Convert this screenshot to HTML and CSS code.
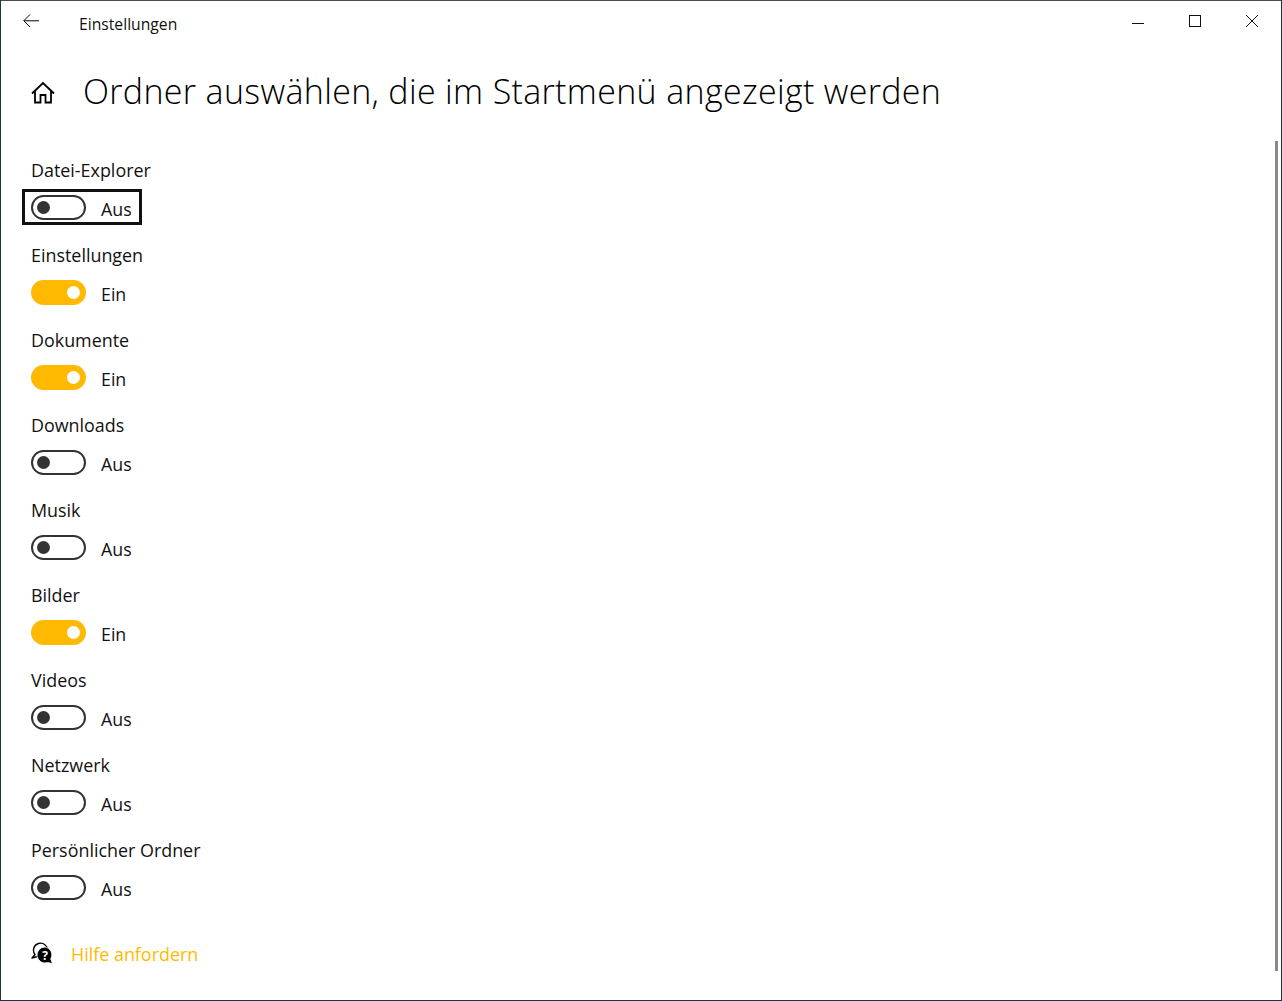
FILE: index.html
```html
<!DOCTYPE html>
<html lang="de">
<head>
    <meta charset="UTF-8">
    <title>Einstellungen</title>
    <link rel="stylesheet" href="styles.css">
</head>
<body>
<div class="window">
    <div class="titlebar">
        <svg class="back_icon" width="16" height="14" viewBox="0 0 16 14">
            <path d="M7 .5 .8 6.800 7 13M1 6.800h15" fill="none" stroke="#000" stroke-width="1"/>
        </svg>
        <span class="app_name">Einstellungen</span>
        <div class="win_btns">
            <svg width="12" height="12" viewBox="0 0 12 12"><path d="M0 8.500h12" stroke="#111" fill="none"/></svg>
            <svg width="12" height="12" viewBox="0 0 12 12"><rect x=".5" y=".5" width="11" height="11" stroke="#111" fill="none"/></svg>
            <svg width="12" height="12" viewBox="0 0 12 12"><path d="M0 0l12 12M12 0 0 12" stroke="#111" fill="none"/></svg>
        </div>
    </div>
    <div class="page_head">
        <svg class="home_icon" width="24" height="24" viewBox="0 0 24 24">
            <path d="M1 12.500 12 2l11 10.500M4 10v11.500h5.500v-7.500h5v7.500H20V10" fill="none" stroke="#000" stroke-width="1.800"/>
        </svg>
        <h1>Ordner auswählen, die im Startmenü angezeigt werden</h1>
    </div>
    <div class="content">
        <div class="setting">
            <div class="setting_name">Datei-Explorer</div>
            <div class="toggle_row focused"><span class="toggle"></span><span class="state">Aus</span></div>
        </div>
        <div class="setting">
            <div class="setting_name">Einstellungen</div>
            <div class="toggle_row"><span class="toggle on"></span><span class="state">Ein</span></div>
        </div>
        <div class="setting">
            <div class="setting_name">Dokumente</div>
            <div class="toggle_row"><span class="toggle on"></span><span class="state">Ein</span></div>
        </div>
        <div class="setting">
            <div class="setting_name">Downloads</div>
            <div class="toggle_row"><span class="toggle"></span><span class="state">Aus</span></div>
        </div>
        <div class="setting">
            <div class="setting_name">Musik</div>
            <div class="toggle_row"><span class="toggle"></span><span class="state">Aus</span></div>
        </div>
        <div class="setting">
            <div class="setting_name">Bilder</div>
            <div class="toggle_row"><span class="toggle on"></span><span class="state">Ein</span></div>
        </div>
        <div class="setting">
            <div class="setting_name">Videos</div>
            <div class="toggle_row"><span class="toggle"></span><span class="state">Aus</span></div>
        </div>
        <div class="setting">
            <div class="setting_name">Netzwerk</div>
            <div class="toggle_row"><span class="toggle"></span><span class="state">Aus</span></div>
        </div>
        <div class="setting">
            <div class="setting_name">Persönlicher Ordner</div>
            <div class="toggle_row"><span class="toggle"></span><span class="state">Aus</span></div>
        </div>
        <div class="help">
            <svg class="help_icon" width="22" height="22" viewBox="0 0 22 22">
                <path d="M4 12.500 1 16l5.500-1.500a7 7 0 1 0-2.500-2z" fill="#fff" stroke="#000" stroke-width="1.400" stroke-linejoin="round"/>
                <path d="M14 5a8 8 0 1 0 2.500 15.600L21.500 21.500 19.700 17A8 8 0 0 0 14 5z" fill="#000" stroke="#fff" stroke-width=".8"/>
                <text x="14" y="17.500" class="help_mark">?</text>
            </svg>
            <a class="help_link">Hilfe anfordern</a>
        </div>
    </div>
    <div class="scrollbar"></div>
</div>
</body>
</html>
```

FILE: styles.css
```css
* {
    box-sizing: border-box;
}

html, body {
    height: 100%;
}

body {
    margin: 0;
    background: #1f3349;
    font-family: "Open Sans", "Noto Sans", sans-serif;
    color: #111;
    overflow: hidden;
}

.window {
    position: relative;
    width: 1280px;
    height: 1000px;
    margin-left: 1px;
    background: #fff;
    border-top: 1px solid #4a4a4a;
}

.titlebar {
    display: flex;
    align-items: center;
    height: 47px;
    padding-left: 22px;
}

.back_icon {
    margin-top: -7px;
}

.app_name {
    margin-left: 40px;
    margin-top: -2px;
    font-size: 15.700px;
}

.win_btns {
    display: flex;
    gap: 45px;
    margin-left: auto;
    margin-right: 23px;
    margin-top: -7px;
}

.page_head {
    display: flex;
    align-items: center;
    height: 90px;
    padding-left: 30px;
}

h1 {
    margin: 0 0 4px 28px;
    font-size: 34px;
    font-weight: 300;
    letter-spacing: 0.33px;
    color: #000;
}

.content {
    padding-left: 30px;
    padding-top: 17px;
}

.setting {
    height: 85px;
}

.setting_name {
    height: 27px;
    padding-top: 3px;
    font-size: 17.900px;
}

.toggle_row {
    display: flex;
    align-items: center;
    height: 25px;
    margin-top: 13px;
}

.toggle {
    position: relative;
    width: 55px;
    height: 25px;
    border: 2px solid #333;
    border-radius: 13px;
}

.toggle::after {
    content: "";
    position: absolute;
    left: 4px;
    top: 4px;
    width: 13px;
    height: 13px;
    border-radius: 50%;
    background: #333;
}

.toggle.on {
    background: #ffb900;
    border-color: #ffb900;
}

.toggle.on::after {
    left: auto;
    right: 4px;
    background: #fff;
}

.state {
    margin-left: 15px;
    margin-top: 2px;
    font-size: 17.800px;
}

.focused {
    position: relative;
    width: 101px;
}

.focused::after {
    content: "";
    position: absolute;
    left: -9px;
    right: -10px;
    top: -6px;
    bottom: -5px;
    border: 3px solid #111;
}

.help {
    display: flex;
    align-items: center;
    gap: 18px;
    margin-top: 22px;
}

.help_icon {
    margin-top: -3px;
}

.help_link {
    color: #ffb900;
    font-size: 17.900px;
}

.help_mark {
    fill: #fff;
    font-size: 12px;
    font-weight: 700;
    text-anchor: middle;
}

.scrollbar {
    position: absolute;
    right: 3px;
    top: 140px;
    width: 3px;
    height: 830px;
    background: #8a8a8a;
}
```
